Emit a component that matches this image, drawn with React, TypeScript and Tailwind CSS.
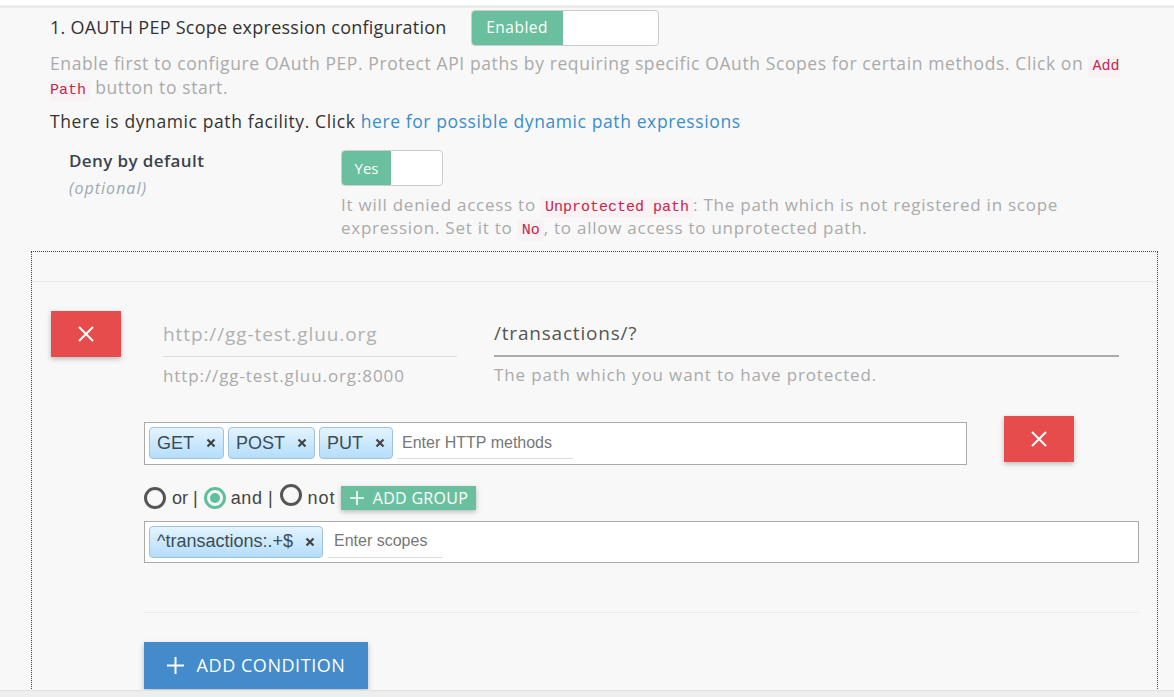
import React from "react";

const sans = { fontFamily: '"Open Sans", "Noto Sans", sans-serif' };
const arial = { fontFamily: '"Liberation Sans", Arial, sans-serif' };
const mono = { fontFamily: '"Liberation Mono", "DejaVu Sans Mono", monospace' };

function Code({ children }: { children: React.ReactNode }) {
  return (
    <code
      style={mono}
      className="text-[15px] leading-none tracking-normal text-[#c7254e] bg-[#f9f2f4] rounded-[3px] px-[4px] py-[2px]"
    >
      {children}
    </code>
  );
}

function Tag({ label }: { label: string }) {
  return (
    <span
      style={arial}
      className="flex items-center h-[32px] pl-[7px] pr-[7px] rounded-[4px] border border-[#9fc3dc] bg-gradient-to-b from-[#e4f4ff] to-[#b4ddfa] text-[18px] text-[#3c4b58]"
    >
      <span>{label}</span>
      <svg className="ml-[12px]" width="10" height="10" viewBox="0 0 10 10">
        <path d="M1.5 1.5 L8.5 8.5 M8.5 1.5 L1.5 8.5" stroke="#444" strokeWidth="2.2" />
      </svg>
    </span>
  );
}

function XBtn() {
  return (
    <div className="w-[70px] h-[46px] bg-[#e64c4c] flex items-center justify-center shadow-[0_2px_5px_rgba(0,0,0,0.25)]">
      <svg width="18" height="18" viewBox="0 0 18 18">
        <path d="M2 2 L16 16 M16 2 L2 16" stroke="#fff" strokeWidth="2" />
      </svg>
    </div>
  );
}

function Plus({ size, w }: { size: number; w: number }) {
  return (
    <svg width={size} height={size} viewBox={`0 0 ${size} ${size}`}>
      <path d={`M${size / 2} 0 V${size} M0 ${size / 2} H${size}`} stroke="#fff" strokeWidth={w} />
    </svg>
  );
}

function Radio({ on }: { on?: boolean }) {
  return (
    <span
      className={
        "inline-flex items-center justify-center w-[22px] h-[22px] rounded-full border-[3px] " +
        (on ? "border-[#5fbf9c]" : "border-[#555]")
      }
    >
      {on && <span className="w-[10px] h-[10px] rounded-full bg-[#5fbf9c]" />}
    </span>
  );
}

export default function App() {
  return (
    <div style={sans} className="w-[1174px] h-[697px] bg-[#f8f8f8] overflow-hidden relative">
      <div className="h-[5px] bg-white" />
      <div className="h-[3px] bg-[#ececec]" />

      <div className="pl-[50px]">
        <div className="flex items-center mt-[2px]">
          <span className="text-[18px] text-[#333] tracking-[0.25px] mt-[-2px]">1. OAUTH PEP Scope expression configuration</span>
          <div className="ml-[24px] w-[188px] h-[36px] rounded-[4px] border border-[#ccc] bg-white flex overflow-hidden">
            <div className="w-[91px] bg-[#6abf9e] text-white text-[15.5px] tracking-[0.5px] flex items-center justify-center">Enabled</div>
          </div>
        </div>

        <p className="mt-[5px] text-[17.5px] leading-[24px] tracking-[0.6px] text-[#aaa] pr-[30px]">
          Enable first to configure OAuth PEP. Protect API paths by requiring specific OAuth Scopes for certain methods. Click on{" "}
          <Code>Add Path</Code> button to start.
        </p>
        <p className="mt-[10px] text-[17.5px] leading-[24px] tracking-[0.6px] text-[#333]">
          There is dynamic path facility. Click{" "}
          <span className="text-[#3b8dcc]">here for possible dynamic path expressions</span>
        </p>

        <div className="flex mt-[14px]">
          <div className="w-[291px] pl-[19px] pt-[1px]">
            <div className="text-[17px] font-semibold text-[#3a4450] tracking-[0.4px]">Deny by default</div>
            <div className="text-[16px] italic text-[#9aa8b4] mt-[2px] tracking-[1px]">(optional)</div>
          </div>
          <div>
            <div className="mt-[3px] w-[102px] h-[36px] rounded-[4px] border border-[#ccc] bg-white flex overflow-hidden">
              <div className="w-[49px] bg-[#6abf9e] text-white text-[15px] flex items-center justify-center">Yes</div>
            </div>
            <p className="mt-[7px] w-[780px] text-[17px] leading-[23px] text-[#aaa] tracking-[0.75px]">
              It will denied access to <Code>Unprotected path</Code>: The path which is not registered in scope expression. Set it to{" "}
              <Code>No</Code>, to allow access to unprotected path.
            </p>
          </div>
        </div>
      </div>

      <div className="ml-[31px] mt-[12px] w-[1127px] h-[460px] border-t border-l border-r border-dotted border-[#444]">
        <div className="h-[29px]" />
        <div className="border-t border-[#ebebeb]" />
        <div className="flex pt-[29px] pl-[19px]">
          <XBtn />
          <div className="ml-[42px] w-[294px]">
            <div className="h-[46px] flex items-center border-b border-[#ddd] text-[19px] tracking-[0.9px] text-[#b0b0b0] pt-[1px]">http://gg-test.gluu.org</div>
            <div className="mt-[6px] text-[17px] tracking-[0.9px] text-[#aaa]">http://gg-test.gluu.org:8000</div>
          </div>
          <div className="ml-[37px] w-[625px]">
            <div className="h-[46px] flex items-center border-b-2 border-[#aaa] text-[19px] tracking-[0.8px] text-[#555] pt-[1px]">/transactions/?</div>
            <div className="mt-[5px] text-[17px] tracking-[0.85px] text-[#aaa]">The path which you want to have protected.</div>
          </div>
        </div>

        <div className="pl-[112px]">
          <div className="flex items-start mt-[27px]">
            <div className="w-[823px] h-[43px] mt-[6px] bg-white border border-[#aaa] flex items-center gap-[4px] pl-[4px]">
              <Tag label="GET" />
              <Tag label="POST" />
              <Tag label="PUT" />
              <div style={arial} className="w-[176px] h-[32px] flex items-center border-b border-[#ddd] pl-[5px] text-[16px] text-[#777]">
                Enter HTTP methods
              </div>
            </div>
            <div className="ml-[37px]">
              <XBtn />
            </div>
          </div>

          <div className="flex items-center mt-[21px] h-[25px] text-[#444]" style={arial}>
            <Radio />
            <span className="ml-[6px] text-[18px]">or |</span>
            <span className="ml-[6px]"><Radio on /></span>
            <span className="ml-[5px] text-[18px] tracking-[0.6px]">and |</span>
            <span className="ml-[7px]"><Radio /></span>
            <span className="ml-[5px] text-[18px] tracking-[1px]">not</span>
            <div style={sans} className="ml-[6px] h-[24px] w-[135px] bg-[#6abf9e] text-white text-[16px] tracking-[0.3px] flex items-center justify-center shadow-[0_2px_5px_rgba(0,0,0,0.25)]">
              <span className="mr-[9px] flex"><Plus size={14} w={1.6} /></span>ADD GROUP
            </div>
          </div>

          <div className="mt-[10px] w-[995px] h-[42px] bg-white border border-[#aaa] flex items-center gap-[5px] pl-[4px]">
            <Tag label="^transactions:.+$" />
            <div style={arial} className="w-[115px] h-[32px] flex items-center border-b border-[#ddd] pl-[6px] text-[16px] text-[#777]">
              Enter scopes
            </div>
          </div>

          <div className="mt-[49px] w-[995px] border-t border-[#ebebeb]" />

          <div className="mt-[29px] w-[224px] h-[47px] bg-[#438bca] text-white text-[18px] tracking-[0.55px] flex items-center justify-center shadow-[0_2px_5px_rgba(0,0,0,0.25)]">
            <span className="mr-[13px] flex"><Plus size={17} w={2} /></span>ADD CONDITION
          </div>
        </div>
      </div>

      <div className="absolute left-0 bottom-0 w-full h-[7px] bg-[#eeeeee] border-t border-[#e2e2e2]" />
    </div>
  );
}
